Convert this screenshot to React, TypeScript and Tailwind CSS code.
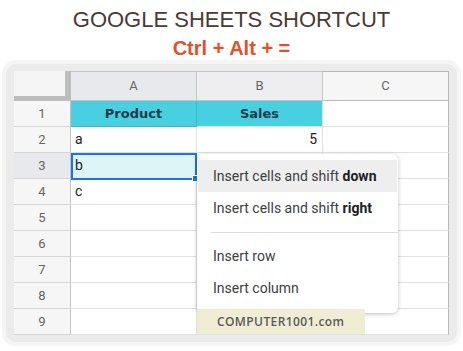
import React from "react";

const rows: { n: number; a?: string; b?: string }[] = [
  { n: 1 },
  { n: 2, a: "a", b: "5" },
  { n: 3, a: "b" },
  { n: 4, a: "c" },
  { n: 5 },
  { n: 6 },
  { n: 7 },
  { n: 8 },
  { n: 9 },
];

export default function App() {
  return (
    <div
      className="w-[463px] h-[351px] bg-white overflow-hidden"
      style={{ fontFamily: "Roboto, Arial, sans-serif" }}
    >
      <div className="pt-[7px] flex flex-col items-center">
        <div
          className="text-[22px] leading-[25px] text-[#4a3b34]"
          style={{ fontFamily: "'Liberation Sans', Arial, sans-serif" }}
        >
          GOOGLE SHEETS SHORTCUT
        </div>
        <div
          className="mt-[5px] text-[20px] leading-[22px] font-bold text-[#e0522a]"
          style={{ fontFamily: "'Liberation Sans', Arial, sans-serif" }}
        >
          Ctrl + Alt + =
        </div>
      </div>
      <div className="mx-[2px] mt-[1px] rounded-[14px] bg-[#f5f5f5] p-[4px]">
        <div className="rounded-[10px] bg-[#ebebeb] px-[8px] pt-[7px] pb-[7px]">
          <div className="relative bg-white">
            <div className="grid grid-cols-[57px_126px_126px_126px]">
              {/* header row */}
              <div className="h-[30px] bg-[#f5f5f5] border-r-[6px] border-b-[5px] border-[#bdbdbd]" />
              <div className="h-[30px] bg-[#e8e9ec] border-t border-r border-b border-[#c4c4c4] flex items-center justify-center text-[13px] text-[#666]">
                A
              </div>
              <div className="h-[30px] bg-[#eeeef0] border-t border-r border-b border-[#c4c4c4] flex items-center justify-center text-[13px] text-[#666]">
                B
              </div>
              <div className="h-[30px] bg-[#f6f6f6] border-t border-r border-b border-[#b8b8b8] flex items-center justify-center text-[13px] text-[#666]">
                C
              </div>
              {rows.map((r) => (
                <React.Fragment key={r.n}>
                  <div
                    className={`h-[26px] border-r border-b border-r-[#c4c4c4] border-b-[#d6d6d6] flex items-center justify-center text-[13px] text-[#666] ${
                      r.n === 3 ? "bg-[#e8e9ec]" : "bg-[#f6f6f6]"
                    }`}
                  >
                    {r.n}
                  </div>
                  {r.n === 1 ? (
                    <>
                      <div
                        className="h-[26px] bg-[#48cfe0] border-r border-b border-[#3fb8c8] flex items-center justify-center text-[13px] font-bold text-[#1f3a4a]"
                        style={{ fontFamily: "'DejaVu Sans', Verdana, sans-serif" }}
                      >
                        Product
                      </div>
                      <div
                        className="h-[26px] bg-[#48cfe0] border-r border-b border-[#e0e0e0] flex items-center justify-center text-[13px] font-bold text-[#1f3a4a]"
                        style={{ fontFamily: "'DejaVu Sans', Verdana, sans-serif" }}
                      >
                        Sales
                      </div>
                    </>
                  ) : (
                    <>
                      <div
                        className={`h-[26px] border-r border-b border-[#e0e0e0] flex items-center pl-[4px] text-[14px] text-[#222] ${
                          r.n === 3 ? "bg-[#def5f7]" : ""
                        }`}
                      >
                        {r.a}
                      </div>
                      <div className="h-[26px] border-r border-b border-[#e0e0e0] flex items-center justify-end pr-[5px] text-[14px] text-[#222]">
                        {r.b}
                      </div>
                    </>
                  )}
                  <div className="h-[26px] border-r border-b border-r-[#b8b8b8] border-b-[#e0e0e0]" />
                </React.Fragment>
              ))}
            </div>

            {/* selection */}
            <div className="absolute left-[57px] top-[82px] w-[126px] h-[27px] border-2 border-[#1a73e8]" />
            <div className="absolute left-[178px] top-[104px] w-[6px] h-[7px] bg-[#1a73e8] border border-white" />

            {/* context menu */}
            <div className="absolute left-[183px] top-[83px] w-[201px] h-[159px] bg-white rounded-[6px] shadow-[0_1px_4px_rgba(0,0,0,0.25)] pt-[6px] text-[14px] text-[#3c4043]">
              <div className="h-[32px] bg-[#eeeeee] flex items-center pl-[15px] mx-[1px]">
                Insert cells and shift&nbsp;<span className="font-bold text-[#202124]">down</span>
              </div>
              <div className="h-[32px] flex items-center pl-[16px]">
                Insert cells and shift&nbsp;<span className="font-bold text-[#202124]">right</span>
              </div>
              <div className="h-[16px] flex items-center pl-[14px]">
                <div className="h-px w-full bg-[#dadce0]" />
              </div>
              <div className="h-[32px] flex items-center pl-[16px]">Insert row</div>
              <div className="h-[32px] flex items-center pl-[16px]">Insert column</div>
            </div>

            {/* watermark */}
            <div
              className="absolute left-[183px] top-[238px] w-[168px] h-[25px] bg-[#efedd3] flex items-center pl-[20px] text-[12px] font-semibold tracking-[0.4px] text-[#5a5a5a]"
              style={{ fontFamily: "'Open Sans', sans-serif" }}
            >
              COMPUTER1001.com
            </div>
          </div>
        </div>
      </div>
    </div>
  );
}
